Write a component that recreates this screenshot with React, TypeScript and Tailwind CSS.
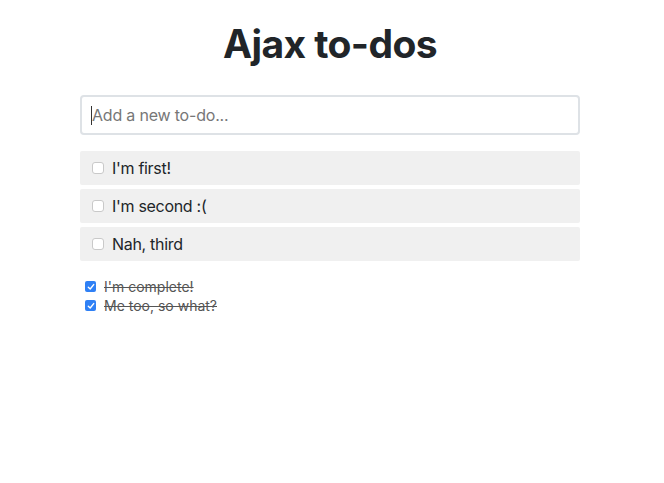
const todos = ["I'm first!", "I'm second :(", "Nah, third"];
const done = ["I'm complete!", "Me too, so what?"];

const Box = ({ checked }: { checked?: boolean }) =>
  checked ? (
    <span className="flex h-[11px] w-[11px] shrink-0 items-center justify-center rounded-[2px] bg-[#2f80f5]">
      <svg width="8" height="8" viewBox="0 0 8 8" fill="none">
        <path d="M1.3 4.2 L3.2 6 L6.7 1.6" stroke="white" strokeWidth="1.4" strokeLinecap="round" strokeLinejoin="round" />
      </svg>
    </span>
  ) : (
    <span className="block h-[12px] w-[12px] shrink-0 rounded-[3px] border border-[#c9c9c9] bg-white" />
  );

const App = () => {
  return (
    <div className="min-h-[483px] bg-white font-['Inter',sans-serif] text-[#212529]">
      <div className="ml-[80px] w-[500px] pt-[20px]">
        <h1 className="text-center text-[39px] font-bold leading-[48px] tracking-[-0.6px]">
          Ajax to-dos
        </h1>
        <div className="relative mt-[27px]">
          <input
            type="text"
            placeholder="Add a new to-do..."
            className="block h-[40px] w-full rounded-[4px] border-2 border-[#dee2e6] px-[10px] text-[16px] tracking-[-0.2px] text-[#495057] placeholder:text-[#777] outline-none"
          />
          <span className="absolute left-[11px] top-[11px] h-[19px] w-px bg-[#333]" />
        </div>
        <ul className="mt-[16px] flex flex-col gap-[4px]">
          {todos.map((t) => (
            <li
              key={t}
              className="flex h-[34px] items-center gap-[8px] rounded-[2px] bg-[#f0f0f0] px-[12px] text-[16px] tracking-[-0.3px]"
            >
              <Box />
              <span>{t}</span>
            </li>
          ))}
        </ul>
        <ul className="mt-[18px] flex flex-col gap-[4px] pl-[5px]">
          {done.map((t) => (
            <li key={t} className="flex h-[15px] items-center gap-[8px] text-[14px] text-[#555]">
              <Box checked />
              <span className="line-through">{t}</span>
            </li>
          ))}
        </ul>
      </div>
    </div>
  );
};

export default App;
